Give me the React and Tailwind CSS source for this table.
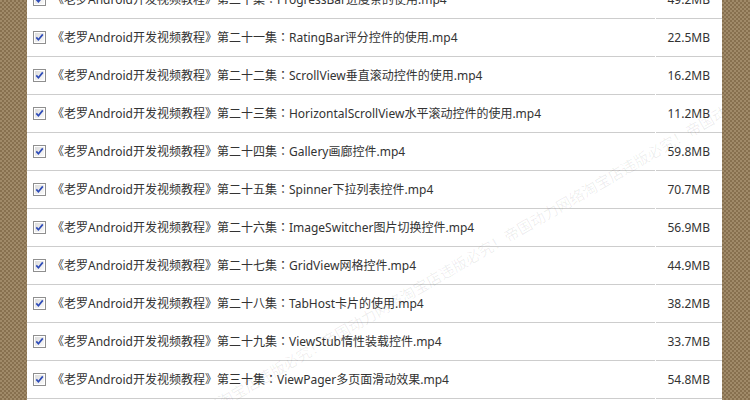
import React from 'react'

const rows = [
  ['第二十集', 'ProgressBar进度条的使用.mp4', '49.2MB'],
  ['第二十一集', 'RatingBar评分控件的使用.mp4', '22.5MB'],
  ['第二十二集', 'ScrollView垂直滚动控件的使用.mp4', '16.2MB'],
  ['第二十三集', 'HorizontalScrollView水平滚动控件的使用.mp4', '11.2MB'],
  ['第二十四集', 'Gallery画廊控件.mp4', '59.8MB'],
  ['第二十五集', 'Spinner下拉列表控件.mp4', '70.7MB'],
  ['第二十六集', 'ImageSwitcher图片切换控件.mp4', '56.9MB'],
  ['第二十七集', 'GridView网格控件.mp4', '44.9MB'],
  ['第二十八集', 'TabHost卡片的使用.mp4', '38.2MB'],
  ['第二十九集', 'ViewStub惰性装载控件.mp4', '33.7MB'],
  ['第三十集', 'ViewPager多页面滑动效果.mp4', '54.8MB'],
]

const mark = '违版必究！帝国动力网络淘宝店'.repeat(6)

function Check() {
  return (
    <svg width="13" height="13" viewBox="0 0 13 13" className="shrink-0">
      <defs>
        <linearGradient id="cbg" x1="0" y1="0" x2="1" y2="1">
          <stop offset="0" stopColor="#dcdcdc" />
          <stop offset="1" stopColor="#fafafa" />
        </linearGradient>
      </defs>
      <rect x="0.5" y="0.5" width="12" height="12" fill="#fff" stroke="#8f8f8f" />
      <rect x="2" y="2" width="9" height="9" fill="url(#cbg)" />
      <path d="M3.3 6.4 L5.4 8.8 L9.8 3.4" fill="none" stroke="#2d4bb8" strokeWidth="1.7" />
    </svg>
  )
}

export default function App() {
  return (
    <div className="w-[750px] h-[400px] overflow-hidden flex bg-[repeating-conic-gradient(#87704f_0%_25%,#a08a69_0%_50%)] bg-[length:4px_4px]">
      <div
        className="relative ml-[27px] w-[695px] h-full bg-white overflow-hidden text-[12px] text-[#333]"
        style={{ fontFamily: '"Noto Sans", "Noto Sans CJK SC", sans-serif' }}
      >
        <div className="-mt-[19px]">
          {rows.map(([ep, name, size], i) => (
            <div key={i} className="flex h-[38px] gap-px">
              <div className="flex-1 flex items-center gap-[6px] pl-[6px] border-b border-[#cdcdcd]">
                <Check />
                <span className="whitespace-nowrap">
                  《老罗Android开发视频教程》{ep}
                  <span style={{ fontFamily: '"Noto Sans CJK TC", sans-serif' }}>：</span>
                  {name}
                </span>
              </div>
              <div className="w-[66px] flex items-center justify-end pr-[12px] border-b border-[#cdcdcd]">
                {size}
              </div>
            </div>
          ))}
        </div>
        <div
          className="absolute left-[-217px] top-[265px] w-[1260px] text-[15px] leading-[20px] text-black/[0.07] -rotate-30 whitespace-nowrap pointer-events-none"
          style={{ fontFamily: '"Noto Sans CJK SC", sans-serif' }}
        >
          {mark}
        </div>
      </div>
    </div>
  )
}
